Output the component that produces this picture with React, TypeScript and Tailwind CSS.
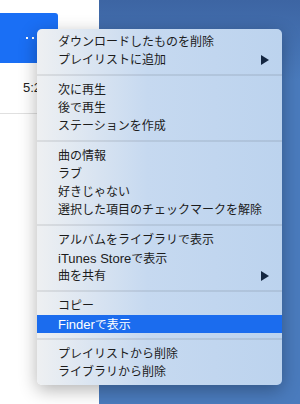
import type { ReactNode } from 'react';

type Item = { label: ReactNode; sub?: boolean; active?: boolean };

const groups: Item[][] = [
  [{ label: 'ダウンロードしたものを削除' }, { label: 'プレイリストに追加', sub: true }],
  [{ label: '次に再生' }, { label: '後で再生' }, { label: 'ステーションを作成' }],
  [
    { label: '曲の情報' },
    { label: 'ラブ' },
    { label: '好きじゃない' },
    { label: '選択した項目のチェックマークを解除' },
  ],
  [
    { label: 'アルバムをライブラリで表示' },
    {
      label: (
        <>
          <span className="text-[13px]">iTunes Store</span>で表示
        </>
      ),
    },
    { label: '曲を共有', sub: true },
  ],
  [
    { label: 'コピー' },
    {
      label: (
        <>
          <span className="text-[13px]">Finder</span>で表示
        </>
      ),
      active: true,
    },
  ],
  [{ label: 'プレイリストから削除' }, { label: 'ライブラリから削除' }],
];

function Arrow({ light }: { light?: boolean }) {
  return (
    <svg width="8" height="10" viewBox="0 0 8 10" className="mr-[13px]">
      <polygon points="0,0 8,5 0,10" fill={light ? '#fff' : '#142640'} />
    </svg>
  );
}

function MenuRow({ item }: { item: Item }) {
  return (
    <div
      className={`h-[18px] flex items-center justify-between pl-[21px] leading-none ${
        item.active ? 'bg-[#1b6cee] text-white' : 'text-[#1c1c1c]'
      }`}
    >
      <span>{item.label}</span>
      {item.sub && <Arrow light={item.active} />}
    </div>
  );
}

export default function App() {
  return (
    <div className="relative w-[300px] h-[404px] overflow-hidden flex font-['Liberation_Sans','Noto_Sans_CJK_JP',sans-serif]">
      <div className="w-[99px] bg-white pt-[13px]">
        <div className="h-[50px] w-[58px] bg-[#1a6ff5] rounded-tr-[3px] flex items-center pl-[26px]">
          <div className="flex gap-[4px]">
            <span className="w-[2px] h-[2px] bg-white" />
            <span className="w-[2px] h-[2px] bg-white" />
            <span className="w-[2px] h-[2px] bg-white" />
          </div>
        </div>
        <div className="h-[51px] border-b border-[#e0e0e0] flex items-center pl-[23px] text-[13px] text-[#222]">
          5:21
        </div>
      </div>
      <div className="flex-1 bg-linear-to-b from-[#3d65a3] to-[#4a7bbd] to-[20%]" />

      <div className="absolute left-[37px] top-[29px] w-[245px] py-[4px] rounded-[5px] text-[12px] bg-linear-to-r from-[#eef0f2] via-[#c6d9f0] via-[45%] to-[#bcd3ee] shadow-[0_5px_18px_rgba(0,0,0,0.3)]">
        {groups.map((g, gi) => (
          <div key={gi}>
            {gi > 0 && (
              <div className="h-[12px] flex items-center">
                <div className="h-[2px] w-full bg-black/[0.08]" />
              </div>
            )}
            {g.map((it, i) => (
              <MenuRow key={i} item={it} />
            ))}
          </div>
        ))}
      </div>
    </div>
  );
}
